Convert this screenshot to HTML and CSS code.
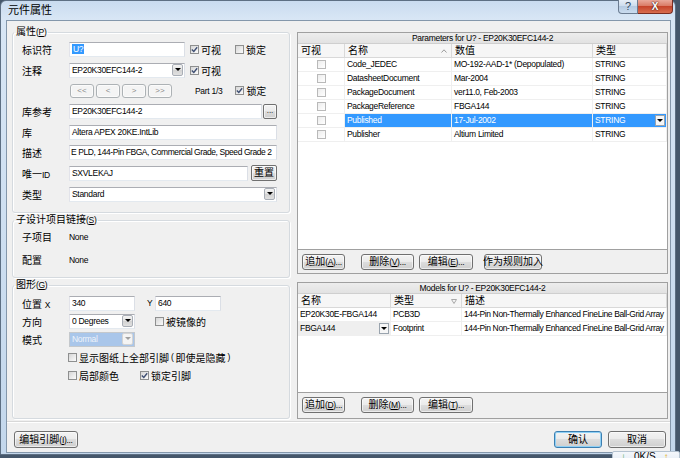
FILE: index.html
```html
<!DOCTYPE html>
<html>
<head>
  <meta charset="utf-8">
  <title>元件属性</title>
  <link rel="stylesheet" href="styles.css">
</head>
<body>
  <div class="window">
    <div class="titlebar">
      <span class="title">元件属性</span>
      <div class="caption-buttons">
        <span class="cap-btn help">?</span>
        <span class="cap-btn close">X</span>
      </div>
    </div>

    <div class="client">
      <div class="main">
        <div class="left-col">

          <fieldset class="group props">
            <legend>属性<span class="en">(<u>P</u>)</span></legend>
            <div class="row">
              <span class="lbl">标识符</span>
              <div class="edit w116"><span class="sel">U?</span></div>
              <span class="cb ml5"><span class="chk on"><svg width="7" height="7" viewBox="0 0 7 7"><path d="M0.8 3.4 L2.8 5.4 L6.2 1.2" fill="none" stroke="#3f4f73" stroke-width="1.4"/></svg></span>可视</span>
              <span class="cb ml14"><span class="chk"></span>锁定</span>
            </div>
            <div class="row">
              <span class="lbl">注释</span>
              <div class="combo w116"><span class="val">EP20K30EFC144-2</span><span class="drop"></span></div>
              <span class="cb ml5"><span class="chk on"><svg width="7" height="7" viewBox="0 0 7 7"><path d="M0.8 3.4 L2.8 5.4 L6.2 1.2" fill="none" stroke="#3f4f73" stroke-width="1.4"/></svg></span>可视</span>
            </div>
            <div class="row">
              <span class="lbl"></span>
              <div class="nav-buttons">
                <span class="btn nav">&lt;&lt;</span>
                <span class="btn nav">&lt;</span>
                <span class="btn nav">&gt;</span>
                <span class="btn nav">&gt;&gt;</span>
              </div>
              <span class="part">Part 1/3</span>
              <span class="cb ml13"><span class="chk on"><svg width="7" height="7" viewBox="0 0 7 7"><path d="M0.8 3.4 L2.8 5.4 L6.2 1.2" fill="none" stroke="#3f4f73" stroke-width="1.4"/></svg></span>锁定</span>
            </div>
            <div class="row">
              <span class="lbl">库参考</span>
              <div class="edit w193">EP20K30EFC144-2</div>
              <span class="btn dots">...</span>
            </div>
            <div class="row">
              <span class="lbl">库</span>
              <div class="edit w208">Altera APEX 20KE.IntLib</div>
            </div>
            <div class="row">
              <span class="lbl">描述</span>
              <div class="edit w208 tight">E PLD, 144-Pin FBGA, Commercial Grade, Speed Grade 2</div>
            </div>
            <div class="row">
              <span class="lbl">唯一<span class="en">ID</span></span>
              <div class="edit w179">SXVLEKAJ</div>
              <span class="btn reset">重置</span>
            </div>
            <div class="row">
              <span class="lbl">类型</span>
              <div class="combo w208"><span class="val">Standard</span><span class="drop"></span></div>
            </div>
          </fieldset>

          <fieldset class="group sub">
            <legend>子设计项目链接<span class="en">(<u>S</u>)</span></legend>
            <div class="row tall">
              <span class="lbl">子项目</span>
              <span class="plain">None</span>
            </div>
            <div class="row tall">
              <span class="lbl">配置</span>
              <span class="plain">None</span>
            </div>
          </fieldset>

          <fieldset class="group graphic">
            <legend>图形<span class="en">(<u>G</u>)</span></legend>
            <div class="row short">
              <span class="lbl">位置 <span class="en">X</span></span>
              <div class="edit w66">340</div>
              <span class="ylbl">Y</span>
              <div class="edit w66">640</div>
            </div>
            <div class="row short">
              <span class="lbl">方向</span>
              <div class="combo w66"><span class="val">0 Degrees</span><span class="drop"></span></div>
              <span class="cb ml20"><span class="chk"></span>被镜像的</span>
            </div>
            <div class="row short">
              <span class="lbl">模式</span>
              <div class="combo w66 disabled"><span class="val">Normal</span><span class="drop"></span></div>
            </div>
            <div class="row short indent">
              <span class="cb"><span class="chk"></span>显示图纸上全部引脚<span class="en">(</span>即使是隐藏<span class="en">)</span></span>
            </div>
            <div class="row short indent">
              <span class="cb"><span class="chk"></span>局部颜色</span>
              <span class="cb ml21"><span class="chk on"><svg width="7" height="7" viewBox="0 0 7 7"><path d="M0.8 3.4 L2.8 5.4 L6.2 1.2" fill="none" stroke="#3f4f73" stroke-width="1.4"/></svg></span>锁定引脚</span>
            </div>
          </fieldset>
        </div>

        <div class="right-col">
          <div class="panel params">
            <div class="grid">
              <div class="cap">Parameters for U? - EP20K30EFC144-2</div>
              <table class="tbl">
                <colgroup>
                  <col style="width:47px"><col style="width:107px"><col style="width:141px"><col>
                </colgroup>
                <thead>
                  <tr>
                    <th>可视</th>
                    <th>名称<svg class="sort" width="6" height="4" viewBox="0 0 6 4"><path d="M0.5 3.5 L3 0.8 L5.5 3.5" fill="none" stroke="#9a9a9a" stroke-width="1"/></svg></th>
                    <th>数值</th>
                    <th>类型</th>
                  </tr>
                </thead>
                <tbody>
                  <tr><td class="c"><span class="chk light"></span></td><td>Code_JEDEC</td><td>MO-192-AAD-1* (Depopulated)</td><td>STRING</td></tr>
                  <tr><td class="c"><span class="chk light"></span></td><td>DatasheetDocument</td><td>Mar-2004</td><td>STRING</td></tr>
                  <tr><td class="c"><span class="chk light"></span></td><td>PackageDocument</td><td>ver11.0, Feb-2003</td><td>STRING</td></tr>
                  <tr><td class="c"><span class="chk light"></span></td><td>PackageReference</td><td>FBGA144</td><td>STRING</td></tr>
                  <tr class="selected"><td class="c"><span class="chk light"></span></td><td>Published</td><td>17-Jul-2002</td><td>STRING<span class="cell-drop"></span></td></tr>
                  <tr><td class="c"><span class="chk light"></span></td><td>Publisher</td><td>Altium Limited</td><td>STRING</td></tr>
                </tbody>
              </table>
            </div>
            <div class="bar">
              <span class="btn b43">追加<span class="en">(<u>A</u>)...</span></span>
              <span class="btn b53 ml16">删除<span class="en">(<u>V</u>)...</span></span>
              <span class="btn b54 ml5">编辑<span class="en">(<u>E</u>)...</span></span>
              <span class="btn b58 ml11">作为规则加入</span>
            </div>
          </div>

          <div class="panel models">
            <div class="grid">
              <div class="cap">Models for U? - EP20K30EFC144-2</div>
              <table class="tbl">
                <colgroup>
                  <col style="width:93px"><col style="width:71px"><col>
                </colgroup>
                <thead>
                  <tr>
                    <th>名称</th>
                    <th>类型<svg class="filter" width="6" height="5" viewBox="0 0 6 5"><path d="M0.5 0.5 H5.5 L3 4.5 Z" fill="none" stroke="#a8a8a8" stroke-width="1"/></svg></th>
                    <th>描述</th>
                  </tr>
                </thead>
                <tbody>
                  <tr><td>EP20K30E-FBGA144</td><td>PCB3D</td><td class="desc">144-Pin Non-Thermally Enhanced FineLine Ball-Grid Array</td></tr>
                  <tr><td class="editcell">FBGA144<span class="cell-drop"></span></td><td>Footprint</td><td class="desc">144-Pin Non-Thermally Enhanced FineLine Ball-Grid Array</td></tr>
                </tbody>
              </table>
            </div>
            <div class="bar">
              <span class="btn b43">追加<span class="en">(<u>D</u>)...</span></span>
              <span class="btn b53 ml16">删除<span class="en">(<u>M</u>)...</span></span>
              <span class="btn b54 ml5">编辑<span class="en">(<u>T</u>)...</span></span>
            </div>
          </div>
        </div>
      </div>

      <div class="footer">
        <span class="btn b64">编辑引脚<span class="en">(<u>I</u>)...</span></span>
        <span class="btn ok">确认</span>
        <span class="btn cancel">取消</span>
      </div>
    </div>
  </div>

  <div class="speed"><span class="down">&#8595;</span><span class="rate">0K/S</span><span class="up">&#8593;</span></div>
</body>
</html>
```

FILE: styles.css
```css
/* Component properties dialog, Win7 look */

html,
body {
    margin: 0;
    padding: 0;
}

body {
    width: 680px;
    height: 458px;
    overflow: hidden;
    position: relative;
    background: #45576b;
    font-family: "Liberation Sans", "Noto Sans CJK SC", sans-serif;
    font-size: 10px;
    color: #000;
}

/* latin text is set small and tight, like the 8pt UI font */
.en,
.plain,
.part,
.edit,
.combo,
.cap,
.ylbl,
.tbl td {
    font-size: 8.5px;
    letter-spacing: -0.3px;
}

.edit.tight {
    letter-spacing: -0.42px;
    padding-left: 1px;
}

.window {
    width: 676px;
    height: 455px;
    box-sizing: border-box;
    border: 1px solid #5d6f83;
    border-radius: 6px 6px 0 0;
    background: linear-gradient(to bottom, #c9dbef, #d8e6f5 18px, #c3d7ec);
    padding: 0 4px 1px 5px;
    display: flex;
    flex-direction: column;
}

/* title bar */

.titlebar {
    height: 19px;
    display: flex;
    align-items: flex-start;
}

.title {
    font-size: 11px;
    line-height: 19px;
    padding-left: 2px;
}

.caption-buttons {
    margin-left: auto;
    margin-right: -2px;
    margin-top: -1px;
    display: flex;
}

.cap-btn {
    height: 14px;
    box-sizing: border-box;
    text-align: center;
    line-height: 13px;
}

.help {
    width: 20px;
    border: 1px solid #6b7c91;
    border-top: none;
    border-radius: 0 0 0 4px;
    background: linear-gradient(to bottom, #e6eef7, #cbdbec 50%, #b6cbe2 50%, #cadcef);
    color: #33475e;
    font-size: 11px;
}

.close {
    width: 35px;
    border: 1px solid #7a2d22;
    border-top: none;
    border-left: none;
    border-radius: 0 0 4px 0;
    background: linear-gradient(to bottom, #eaa99b, #d87660 50%, #c6442b 50%, #d86e4f);
    color: #fff;
    font-weight: bold;
    font-size: 10px;
    text-shadow: 0 0 2px #4d1a12, 0 0 1px #4d1a12;
}

/* client area */

.client {
    flex: 1;
    border: 1px solid #8497ab;
    background: #f0f0f0;
    display: flex;
    flex-direction: column;
}

.main {
    height: 398px;
    box-sizing: border-box;
    padding: 5px 2px 0 5px;
    display: flex;
    gap: 7px;
}

.left-col {
    width: 278px;
    display: flex;
    flex-direction: column;
}

.right-col {
    width: 371px;
    margin-top: 6px;
    display: flex;
    flex-direction: column;
    gap: 8px;
}

/* group boxes */

.group {
    margin: 0;
    padding: 1px 8px 0 9px;
    min-width: 0;
    box-sizing: border-box;
    border: 1px solid #d5dadf;
    border-radius: 3px;
    box-shadow: inset 1px 1px 0 #fff, 1px 1px 0 #fff;
}

.group legend {
    margin-left: -8px;
    padding: 0 2px;
    font-size: 10px;
    line-height: 12px;
}

.props {
    height: 187px;
}

.sub {
    height: 64px;
    margin-top: 1px;
    padding-top: 0;
}

.graphic {
    flex: 1;
    margin-top: 1px;
    padding-top: 3px;
}

.row {
    height: 20.7px;
    display: flex;
    align-items: center;
    white-space: nowrap;
}

.row.tall {
    height: 21px;
}

.row.tall + .row.tall {
    margin-top: 2px;
}

.row.short {
    height: 18px;
}

.row.indent {
    padding-left: 46px;
}

.lbl {
    width: 47px;
    flex: none;
}

/* edits and combos */

.edit,
.combo {
    height: 15px;
    box-sizing: border-box;
    border: 1px solid;
    border-color: #abadb3 #dbdfe6 #e3e9ef #e2e3ea;
    background: #fff;
    line-height: 13px;
    padding-left: 2px;
    overflow: hidden;
    flex: none;
}

.combo {
    display: flex;
    padding-right: 1px;
}

.combo .val {
    flex: 1;
    overflow: hidden;
}

.combo .drop {
    width: 11px;
    height: 12px;
    box-sizing: border-box;
    border: 1px solid #a9aeb6;
    border-radius: 2px;
    background: linear-gradient(to bottom, #f4f4f4, #e1e1e1 50%, #d2d2d2 50%, #e0e0e0);
    display: flex;
    align-items: center;
    justify-content: center;
}

.combo .drop::after,
.cell-drop::after {
    content: "";
    border-left: 3px solid transparent;
    border-right: 3px solid transparent;
    border-top: 3px solid #000;
}

.combo.disabled {
    background: #a9c6ea;
    color: #eef3fa;
    border-color: #c4c8cc;
}

.combo.disabled .drop {
    background: #f4f4f4;
    border-color: #d4d4d4;
}

.combo.disabled .drop::after {
    border-top-color: #a0a0a0;
}

.sel {
    background: #3399ff;
    color: #fff;
    padding: 0 1px;
}

.w66 { width: 66px; }
.w116 { width: 116px; }
.w179 { width: 179px; }
.w193 { width: 193px; }
.w208 { width: 208px; }

.ylbl {
    width: 8px;
    margin-left: 12px;
    flex: none;
}

/* check boxes */

.cb {
    display: flex;
    align-items: center;
    gap: 2px;
}

.chk {
    width: 9px;
    height: 9px;
    box-sizing: border-box;
    border: 1px solid #8e8f8f;
    background: linear-gradient(135deg, #d6d6d6, #fbfbfb);
    display: inline-flex;
    align-items: center;
    justify-content: center;
    vertical-align: middle;
}

.chk.light {
    border-color: #b9b9b9;
    background: linear-gradient(135deg, #ececec, #fff);
}

.ml5 { margin-left: 5px; }
.ml11 { margin-left: 11px; }
.ml13 { margin-left: 13px; }
.ml14 { margin-left: 14px; }
.ml16 { margin-left: 16px; }
.ml20 { margin-left: 20px; }
.ml21 { margin-left: 21px; }

/* buttons */

.btn {
    height: 16px;
    box-sizing: border-box;
    border: 1px solid #707070;
    border-radius: 3px;
    background: linear-gradient(to bottom, #f3f3f3, #ebebeb 48%, #dddddd 50%, #cfcfcf);
    box-shadow: inset 0 0 0 1px rgba(255, 255, 255, 0.6);
    display: inline-flex;
    align-items: center;
    justify-content: center;
    flex: none;
    line-height: 14px;
    white-space: nowrap;
}

.nav-buttons {
    margin-left: 1px;
    display: flex;
    gap: 2px;
}

.btn.nav {
    width: 24px;
    height: 14px;
    border-color: #adb2b5;
    background: #f4f4f4;
    color: #8a8a8a;
    font-size: 8px;
}

.part {
    margin-left: 23px;
}

.btn.dots {
    width: 14px;
    height: 15px;
    margin-left: 1px;
    border-radius: 2px;
    font-size: 8px;
}

.btn.reset {
    width: 26px;
    height: 16px;
    margin-left: 3px;
    border-radius: 2px;
}

.b43 { width: 43px; }
.b53 { width: 53px; }
.b54 { width: 54px; }
.b58 { width: 58px; }
.b64 { width: 64px; }

/* grid panels */

.panel {
    box-sizing: border-box;
    border: 1px solid #a0a0a0;
    background: #f0f0f0;
    display: flex;
    flex-direction: column;
}

.params {
    height: 242px;
}

.models {
    height: 137px;
}

.grid {
    background: #fff;
    border-bottom: 1px solid #a0a0a0;
    box-sizing: border-box;
    overflow: hidden;
}

.params .grid {
    height: 217px;
}

.models .grid {
    height: 110px;
}

.cap {
    height: 11px;
    box-sizing: border-box;
    border-bottom: 1px solid #cfcfcf;
    background: linear-gradient(to bottom, #ededed, #e2e2e2);
    text-align: center;
    line-height: 10px;
}

.tbl {
    width: 100%;
    table-layout: fixed;
    border-collapse: separate;
    border-spacing: 0;
}

.tbl th,
.tbl td {
    height: 13px;
    padding: 0 0 0 2px;
    border-bottom: 1px solid #efefef;
    border-right: 1px solid #efefef;
    line-height: 13px;
    text-align: left;
    white-space: nowrap;
    overflow: hidden;
    font-weight: normal;
}

.tbl th {
    background: #f6f6f6;
    border-color: #d9d9d9;
    padding-left: 3px;
}

.tbl td.c {
    text-align: center;
    padding: 0;
}

.tbl td.desc {
    letter-spacing: -0.38px;
}

.sort,
.filter {
    float: right;
    margin: 5px 4px 0 0;
}

.tbl tr.selected td {
    background: #3399ff;
    color: #fff;
}

.tbl tr.selected td.c {
    background: #fff;
}

.cell-drop {
    float: right;
    width: 10px;
    height: 11px;
    margin: 1px 1px 0 0;
    box-sizing: border-box;
    border: 1px solid #9aa4ae;
    background: #f6f6f6;
    display: flex;
    align-items: center;
    justify-content: center;
}

.tbl td.editcell {
    background: #efefef;
}

.bar {
    flex: 1;
    padding: 4px 0 0 4px;
    display: flex;
    align-items: flex-start;
}

/* footer */

.footer {
    flex: 1;
    margin-top: 3px;
    border-top: 1px solid #fff;
    box-shadow: 0 -1px 0 #d8d8d8;
    padding: 8px 4px 0 7px;
    display: flex;
    align-items: flex-start;
}

.footer .btn {
    height: 17px;
}

.btn.ok {
    width: 48px;
    margin-left: auto;
    border-color: #3c7fb1;
    box-shadow: inset 0 0 0 1px #8fd0f5;
}

.btn.cancel {
    width: 58px;
    margin-left: 6px;
}

/* network speed widget sitting over the corner */

.speed {
    position: absolute;
    left: 612px;
    top: 451px;
    width: 68px;
    height: 14px;
    box-sizing: border-box;
    border: 1px solid #b5c3d1;
    border-radius: 2px;
    background: linear-gradient(to bottom, #f4f7fb, #e3ebf4);
    display: flex;
    align-items: flex-start;
    gap: 8px;
    padding-left: 8px;
    font-size: 10px;
    line-height: 10px;
}

.speed .down {
    color: #2b9a35;
    font-weight: bold;
}

.speed .up {
    color: #e5a900;
    font-weight: bold;
}
```
